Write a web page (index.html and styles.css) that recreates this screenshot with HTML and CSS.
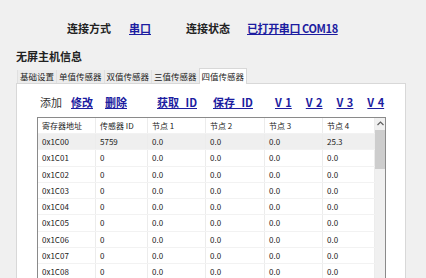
FILE: index.html
```html
<!DOCTYPE html>
<html lang="zh">
<head>
    <meta charset="UTF-8">
    <title>无屏主机信息</title>
    <link rel="stylesheet" href="styles.css">
</head>
<body>

    <div class="conn">
        <span class="conn-label">连接方式</span>
        <a class="link conn-port">串口</a>
        <span class="conn-label">连接状态</span>
        <a class="link conn-state">已打开串口 COM18</a>
    </div>

    <h2 class="title">无屏主机信息</h2>

    <div class="tabs">
        <span class="tab">基础设置</span>
        <span class="tab">单值传感器</span>
        <span class="tab">双值传感器</span>
        <span class="tab">三值传感器</span>
        <span class="tab active">四值传感器</span>
    </div>

    <div class="panel">
        <div class="toolbar">
            <span class="plain">添加</span>
            <a class="link">修改</a>
            <a class="link gap-l">删除</a>
            <a class="link gap-xl wide">获取 ID</a>
            <a class="link gap-m wide">保存 ID</a>
            <a class="link gap-v1 ver">V 1</a>
            <a class="link ver">V 2</a>
            <a class="link ver">V 3</a>
            <a class="link ver">V 4</a>
        </div>

        <div class="grid-box">
            <div class="grid">
                <div class="row head">
                    <span>寄存器地址</span><span>传感器 ID</span><span>节点 1</span><span>节点 2</span><span>节点 3</span><span>节点 4</span>
                </div>
                <div class="row sel">
                    <span>0x1C00</span><span>5759</span><span>0.0</span><span>0.0</span><span>0.0</span><span>25.3</span>
                </div>
                <div class="row"><span>0x1C01</span><span>0</span><span>0.0</span><span>0.0</span><span>0.0</span><span>0.0</span></div>
                <div class="row"><span>0x1C02</span><span>0</span><span>0.0</span><span>0.0</span><span>0.0</span><span>0.0</span></div>
                <div class="row"><span>0x1C03</span><span>0</span><span>0.0</span><span>0.0</span><span>0.0</span><span>0.0</span></div>
                <div class="row"><span>0x1C04</span><span>0</span><span>0.0</span><span>0.0</span><span>0.0</span><span>0.0</span></div>
                <div class="row"><span>0x1C05</span><span>0</span><span>0.0</span><span>0.0</span><span>0.0</span><span>0.0</span></div>
                <div class="row"><span>0x1C06</span><span>0</span><span>0.0</span><span>0.0</span><span>0.0</span><span>0.0</span></div>
                <div class="row"><span>0x1C07</span><span>0</span><span>0.0</span><span>0.0</span><span>0.0</span><span>0.0</span></div>
                <div class="row"><span>0x1C08</span><span>0</span><span>0.0</span><span>0.0</span><span>0.0</span><span>0.0</span></div>
            </div>
            <div class="scroll">
                <div class="scroll-up">
                    <svg width="7" height="5" viewBox="0 0 7 5"><path d="M0.5 4 L3.5 1 L6.5 4" fill="none" stroke="#606060" stroke-width="1.2"/></svg>
                </div>
                <div class="scroll-thumb"></div>
            </div>
        </div>
    </div>

</body>
</html>
```

FILE: styles.css
```css
body { margin: 0; background: #f0f0f0; font-family: "Noto Sans CJK SC", "DejaVu Sans", sans-serif; color: #222; overflow: hidden; }

.link { color: #1c1ca0; text-decoration: underline; font-weight: 700; }

.conn { display: flex; align-items: center; height: 16px; padding: 20px 0 0 67px; font-size: 11px; }
.conn-label { font-weight: 700; }
.conn-port { margin: 0 35px 0 18px; }
.conn-state { margin-left: 17px; letter-spacing: -0.4px; }

.title { margin: 12px 0 0 16px; font-size: 11px; line-height: 16px; font-weight: 700; }

.tabs { display: flex; align-items: flex-end; margin: 3px 0 0 17px; height: 16px; font-size: 8.5px; }
.tab { padding: 0 2px; height: 13px; line-height: 13px; border-left: 1px solid #e0e0e0; background: #ececec; }
.tab.active { background: #fff; height: 15px; line-height: 15px; border: 1px solid #d8d8d8; border-bottom: none; position: relative; top: 1px; }

.panel { margin: 0 20px 0 16px; height: 200px; background: #fff; border: 1px solid #d8d8d8; }

.toolbar { display: flex; align-items: center; height: 18px; margin: 9px 0 6px 23px; font-size: 11px; }
.toolbar .link { margin-left: 9px; }
.toolbar .gap-l { margin-left: 12px; }
.toolbar .gap-xl { margin-left: 30px; }
.toolbar .gap-m { margin-left: 16px; }
.toolbar .wide { word-spacing: 4px; }
.toolbar .ver { margin-left: 14px; word-spacing: 1px; }
.toolbar .gap-v1 { margin-left: 22px; }
.plain { color: #333; }

.grid-box { display: flex; width: 347px; margin-left: 20px; border: 1px solid #8a8a8a; border-bottom: none; height: 170px; }
.grid { width: 337px; font-size: 8px; }
.row { display: grid; grid-template-columns: 58px 52px 58px 59px 58px 52px; height: 16.25px; border-bottom: 1px solid #f2f2f2; box-sizing: border-box; }
.row span { padding-left: 4px; line-height: 15px; border-right: 1px solid #ececec; }
.row.head { height: 16px; }
.row.sel { background: #efefef; }

.scroll { width: 10px; background: #f0f0f0; }
.scroll-up { height: 11px; display: flex; align-items: center; justify-content: center; }
.scroll-thumb { height: 39px; margin-top: 1px; background: #cdcdcd; }
```
